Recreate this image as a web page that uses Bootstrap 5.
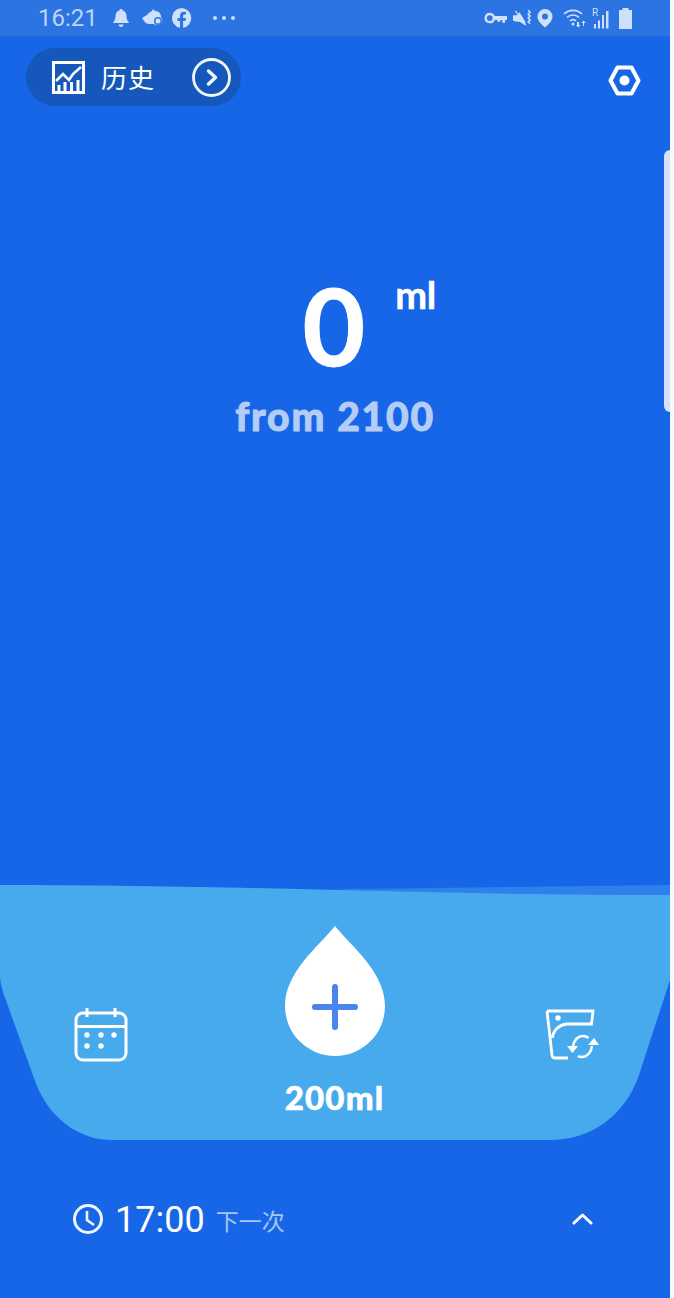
<!DOCTYPE html>
<html lang="zh">
<head>
<meta charset="utf-8">
<title>Water</title>
<link href="https://cdn.jsdelivr.net/npm/bootstrap@5.3.0/dist/css/bootstrap.min.css" rel="stylesheet">
<style>
html,body{margin:0;height:1298px;overflow:hidden;background:#f6f8fb}
.app-shell{width:670px;height:1298px;background:#1766e8;color:#fff;position:relative;font-family:"Lato","Noto Sans CJK SC",sans-serif}
.status-strip{height:36px;background:#2b74e2;color:#bcd4f8;padding:0 37px 0 38px;font-family:Roboto,sans-serif;font-size:24px;line-height:36px}
.status-strip svg{display:block;fill:#cfe0fb}
.status-time{width:58px;margin-right:15px;white-space:nowrap}
.st-gap-bell{margin-right:10px}
.st-gap-fish{margin-right:6px}
.st-gap-dots{margin-left:19px}
.st-mute{margin-left:5px}
.st-pin{margin-left:5px}
.st-wifi{margin-left:10px}
.st-signal{margin-left:5px}
.st-battery{margin-left:7px}
.top-row{height:70px;padding:12px 29px 0 26px}
.history-pill{width:215px;height:58px;border-radius:29px;background:#1557ba;padding:0 10px 0 26px}
.history-text{font-family:"Noto Sans CJK SC",sans-serif;font-size:26px;line-height:1;margin-left:16px;width:91px;letter-spacing:1px}
.gear-btn{margin-top:17px}
.hero-block{height:779px;padding-top:163px;text-align:center}
.hero-num{height:106px;padding-left:68px}
.hero-zero{font-size:108px;font-weight:700;line-height:110px;width:63px;-webkit-text-stroke:1px #fff}
.hero-unit{font-size:38px;font-weight:700;line-height:1;margin:6px 0 0 30px;letter-spacing:-.5px;-webkit-text-stroke:.5px #fff}
.hero-from{font-size:39px;font-weight:900;color:#b4cdf6;line-height:44px;margin-top:19px;letter-spacing:1.8px;-webkit-text-stroke:.9px #b4cdf6}
.water-panel{height:255px;position:relative}
.water-shape{position:absolute;left:0;top:0;width:670px;height:255px}
.water-content{position:relative;height:255px;padding:41px 70px 0 74px}
.drop-col{width:100px;margin-right:4px}
.drop-size{font-size:33px;font-weight:900;line-height:36px;margin-top:23px;text-align:center;letter-spacing:1.2px;white-space:nowrap;-webkit-text-stroke:.6px #fff}
.side-icon{margin-top:82px}
.next-row{height:157px;padding:0 77px 0 73px}
.next-time{font-family:Roboto,sans-serif;font-size:36px;line-height:1;margin:3px 0 0 12px}
.next-label{font-family:"Noto Sans CJK SC",sans-serif;font-size:23px;line-height:1;color:#a6c6f5;margin:3px 0 0 11px}
.scroll-thumb{position:absolute;left:664px;top:150px;width:6px;height:262px;background:#d5e1f6;border-radius:6px 0 0 6px}
</style>
</head>
<body>
<div class="app-shell">
  <div class="status-strip d-flex align-items-center">
    <span class="status-time">16:21</span>
    <svg class="st-gap-bell" width="20" height="20" viewBox="0 0 20 20"><path d="M10 1c1 0 1.600.7 1.700 1.500 2.600.8 3.800 3 3.800 5.500 0 3 .7 4.600 2.200 6v1H2.300v-1c1.500-1.400 2.200-3 2.200-6 0-2.500 1.200-4.700 3.800-5.500C8.400 1.700 9 1 10 1zM7.600 16.500h4.800c0 1.400-1 2.400-2.400 2.400s-2.400-1-2.400-2.400z"/></svg>
    <svg class="st-gap-fish" width="24" height="20" viewBox="0 0 24 20"><path d="M1 10l5-3c1-1 2-3 5-4l1-2 2 2c4 0 6 3 6 6 2 2 2 6-1 7-2 2-5 1-6 0H8c-3 0-5-3-7-6z"/><circle cx="17" cy="13" r="4" fill="#2b74e2"/><circle cx="17" cy="13" r="2.500"/></svg>
    <svg width="22" height="22" viewBox="0 0 22 22"><path d="M11 1a10 10 0 0 0-2 19.800V14H6.500v-3H9V8.700C9 6 10.600 4.700 12.900 4.700l2.100.2v2.600h-1.300c-1.200 0-1.600.7-1.600 1.500v2h2.800l-.5 3h-2.300v6.800A10 10 0 0 0 11 1z"/></svg>
    <svg class="st-gap-dots" width="24" height="6" viewBox="0 0 24 6"><circle cx="3" cy="3" r="2"/><circle cx="12" cy="3" r="2"/><circle cx="21" cy="3" r="2"/></svg>
    <div class="ms-auto d-flex align-items-center">
      <svg width="23" height="14" viewBox="0 0 24 14"><path fill-rule="evenodd" d="M6 1.500a5.500 5.500 0 0 1 5.200 3.500H24v4h-2v3h-3V9h-2v2h-3V9h-2.800A5.500 5.500 0 1 1 6 1.500zm0 2.500a3 3 0 1 0 0 6 3 3 0 0 0 0-6z"/></svg>
      <svg class="st-mute" width="20" height="20" viewBox="0 0 21 20"><path d="M1 7h4l3-3 6 10v4l-6-4H5l-4-1zM4 2l11 15-1 1L3 3z"/><path d="M17 2l2 2-2 2 2 2-2 2 2 2-2 2 2 2" fill="none" stroke="#cfe0fb" stroke-width="1.600"/></svg>
      <svg class="st-pin" width="16" height="20" viewBox="0 0 16 20"><path fill-rule="evenodd" d="M8 1a7.500 7.500 0 0 1 7.500 7.500C15.500 13 11 17 8 19.500 5 17 .5 13 .5 8.500A7.500 7.500 0 0 1 8 1zm0 4.500a3 3 0 1 0 0 6 3 3 0 0 0 0-6z"/></svg>
      <svg class="st-wifi" width="24" height="20" viewBox="0 0 24 20"><path d="M1 6a13 13 0 0 1 18 0M4 9.500a8.500 8.500 0 0 1 12 0M7 13a4 4 0 0 1 6 0" fill="none" stroke="#cfe0fb" stroke-width="1.700"/><circle cx="10" cy="16" r="1.500"/><path d="M14 14h2v3h1.500l-2.200 2.500L13 17h1zM20 18v-3h-1.500l2-2.500 2.300 2.500H21v3z"/></svg>
      <svg class="st-signal" width="19" height="22" viewBox="0 0 19 22"><path d="M2 17h2v4.500H2zM6 13.500h2v8H6zM10 8h2v13.500h-2zM14 4h2.500v17.500H14z"/><text x="0" y="9" font-family="Roboto,sans-serif" font-size="10" fill="#cfe0fb">R</text></svg>
      <svg class="st-battery" width="15" height="21" viewBox="0 0 15 21"><path d="M4.500 0h6v2H14v19H1V2h3.500z"/></svg>
    </div>
  </div>

  <div class="top-row d-flex justify-content-between align-items-start">
    <div class="history-pill d-flex align-items-center">
      <svg width="33" height="33" viewBox="0 0 33 33" fill="none" stroke="#fff" stroke-width="3"><rect x="1.500" y="1.500" width="30" height="30"/><path d="M4 20l7-7 6 6 4-6 8-7" stroke-width="2.600"/><path d="M7 31v-7M13 31v-10M19.500 31v-10M26 31v-12" stroke-width="3"/></svg>
      <span class="history-text">历史</span>
      <svg width="39" height="39" viewBox="0 0 39 39" fill="none" stroke="#f2f6fd" stroke-width="2.800"><circle cx="19.500" cy="19.500" r="18"/><path d="M16.500 13l7 6.500-7 6.500" stroke-linecap="round" stroke-linejoin="round" stroke-width="3.400"/></svg>
    </div>
    <svg class="gear-btn" width="33" height="31" viewBox="0 0 33 31" fill="none" stroke="#fff" stroke-width="4"><path d="M9.500 2.500h14l7 13-7 13h-14l-7-13z" stroke-linejoin="round"/><circle cx="16.500" cy="15.500" r="5" fill="#fff" stroke="none"/></svg>
  </div>

  <div class="hero-block">
    <div class="hero-num d-flex justify-content-center">
      <span class="hero-zero">0</span><span class="hero-unit">ml</span>
    </div>
    <div class="hero-from">from 2100</div>
  </div>

  <div class="water-panel">
    <svg class="water-shape" viewBox="0 0 670 255">
      <path d="M330 4C450 3 560 1 670 0V12L500 12z" fill="#2f80ea"/>
      <path d="M0 0C130 0 250 3 340 5C450 8 560 10 670 10V95L638 193C624 230 592 255 550 255H112C78 255 48 232 35 196L4 110C1 100 0 96 0 90z" fill="#46aaed"/>
    </svg>
    <div class="water-content d-flex justify-content-between align-items-start">
      <svg class="side-icon" width="54" height="54" viewBox="0 0 54 54" fill="none" stroke="#fff" stroke-width="3"><rect x="2" y="5" width="50" height="47" rx="7"/><path d="M2 18.500h50M13 0v9M41 0v9"/><g fill="#fff" stroke="none"><circle cx="13" cy="27" r="2.700"/><circle cx="27" cy="27" r="2.700"/><circle cx="40" cy="27" r="2.700"/><circle cx="13" cy="38" r="2.700"/><circle cx="27" cy="38" r="2.700"/></g></svg>
      <div class="drop-col">
        <svg width="100" height="130" viewBox="0 0 100 130" class="d-block"><path d="M50 0C66 20 100 46 100 80A50 50 0 0 1 0 80C0 46 34 20 50 0z" fill="#fff"/><path d="M30 81h40M50 61v40" stroke="#4a84ec" stroke-width="6" stroke-linecap="round"/></svg>
        <div class="drop-size">200ml</div>
      </div>
      <svg class="side-icon" width="55" height="54" viewBox="0 0 55 54" fill="none" stroke="#fff" stroke-width="2.800"><path d="M2 3h46l-1.500 13H22C14 17 8 22 7.500 30M2 3l5 44c.3 2 1.500 3 3 3h13"/><circle cx="13" cy="10" r="2.700" fill="#fff" stroke="none"/><path d="M28 38c1-6 5-10 10-10 2 0 4 .7 5.500 2M47 38c-.5 6-5 11-10 11-1.500 0-3-.3-4-1" stroke-width="2.600"/><path d="M22 38h11l-5.500 7zM43 37h11l-5-7z" fill="#fff" stroke="none"/></svg>
    </div>
  </div>

  <div class="next-row d-flex align-items-center">
    <svg width="30" height="30" viewBox="0 0 30 30" fill="none" stroke="#f0f5fe" stroke-width="3"><circle cx="15" cy="15" r="13.500"/><path d="M14 7v9l7 5" stroke-width="2.600"/></svg>
    <span class="next-time">17:00</span>
    <span class="next-label">下一次</span>
    <svg class="ms-auto" width="21" height="12" viewBox="0 0 21 12" fill="none" stroke="#fff" stroke-width="3"><path d="M2 10l8.500-8 8.500 8" stroke-linecap="round" stroke-linejoin="round"/></svg>
  </div>

  <div class="scroll-thumb"></div>
</div>
</body>
</html>
